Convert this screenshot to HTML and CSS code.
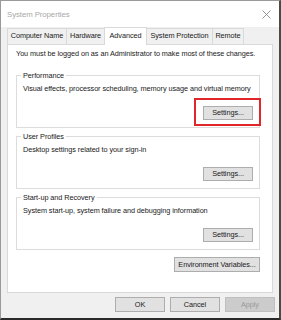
FILE: index.html
```html
<!DOCTYPE html>
<html>
<head>
<meta charset="utf-8">
<link rel="stylesheet" href="styles.css">
</head>
<body>
<div class="window">
  <div class="titlebar">
    <span class="title">System Properties</span>
    <svg class="close" width="9" height="9" viewBox="0 0 9 9"><path d="M0.5 0.5 L8.5 8.5 M8.5 0.5 L0.5 8.5" stroke="#8a8a8a" stroke-width="0.9" fill="none"/></svg>
  </div>
  <div class="tabs">
    <div class="tab t-cn">Computer Name</div>
    <div class="tab t-hw">Hardware</div>
    <div class="tab t-adv active">Advanced</div>
    <div class="tab t-sp">System Protection</div>
    <div class="tab t-rm">Remote</div>
  </div>
  <div class="panel">
    <div class="notice">You must be logged on as an Administrator to make most of these changes.</div>
    <div class="group">
      <div class="group-title">Performance</div>
      <div class="group-text">Visual effects, processor scheduling, memory usage and virtual memory</div>
      <div class="group-actions">
        <button class="btn btn-settings highlighted">Settings...</button>
      </div>
    </div>
    <div class="group">
      <div class="group-title">User Profiles</div>
      <div class="group-text">Desktop settings related to your sign-in</div>
      <div class="group-actions">
        <button class="btn btn-settings">Settings...</button>
      </div>
    </div>
    <div class="group">
      <div class="group-title">Start-up and Recovery</div>
      <div class="group-text">System start-up, system failure and debugging information</div>
      <div class="group-actions">
        <button class="btn btn-settings">Settings...</button>
      </div>
    </div>
    <div class="env-row">
      <button class="btn btn-env">Environment Variables...</button>
    </div>
  </div>
  <div class="footer">
    <button class="btn btn-foot">OK</button>
    <button class="btn btn-foot">Cancel</button>
    <button class="btn btn-foot disabled">Apply</button>
  </div>
</div>
</body>
</html>
```
FILE: styles.css
```css
html, body {
  margin: 0;
  padding: 0;
  background: #ffffff;
}
body {
  width: 281px;
  height: 320px;
  overflow: hidden;
  font-family: "Liberation Sans", Arial, sans-serif;
  font-size: 7.3px;
  letter-spacing: -0.07px;
  color: #1a1a1a;
}
.window {
  box-sizing: border-box;
  width: 281px;
  height: 320px;
  background: #f0f0f0;
  border-top: 1px solid #9a9a9a;
  border-left: 1px solid #9a9a9a;
  border-right: 2px solid #4a4a4a;
  border-bottom: 2px solid #2a2a2a;
  display: flex;
  flex-direction: column;
}
.titlebar {
  height: 26px;
  background: #ffffff;
  display: flex;
  align-items: center;
  justify-content: space-between;
  padding: 0 8px 0 6px;
  flex: none;
}
.title {
  color: #a8a8a8;
  font-size: 7.8px;
}
.close {
  display: block;
}
.tabs {
  display: flex;
  align-items: flex-end;
  height: 17px;
  padding-left: 6px;
  flex: none;
  position: relative;
  z-index: 1;
}
.tab {
  box-sizing: border-box;
  height: 16px;
  line-height: 14px;
  text-align: center;
  background: #f0f0f0;
  border: 1px solid #d9d9d9;
  border-right: none;
  border-bottom: none;
  white-space: nowrap;
}
.t-cn { width: 59px; }
.t-hw { width: 38px; }
.t-adv { width: 43px; }
.t-sp { width: 65px; }
.t-rm { width: 32px; border-right: 1px solid #d9d9d9; }
.tab.active {
  height: 18px;
  background: #ffffff;
  border-right: 1px solid #d9d9d9;
  margin-bottom: -1px;
  line-height: 15px;
}
.tab.active + .tab {
  border-left: none;
}
.panel {
  box-sizing: border-box;
  margin: 0 6px 0 6px;
  height: 249px;
  background: #ffffff;
  border: 1px solid #d9d9d9;
  padding: 4px 12px 0 8px;
  flex: none;
}
.notice {
  line-height: 10px;
  margin-bottom: 16px;
  white-space: nowrap;
}
.group {
  border: 1px solid #dcdcdc;
  padding: 0 6px 7px 6px;
  margin-bottom: 8px;
}
.group-title {
  margin: -6px 0 0 -2px;
  padding: 0 2px;
  background: #ffffff;
  width: max-content;
  line-height: 11px;
}
.group-text {
  margin-top: 3px;
  line-height: 10px;
  white-space: nowrap;
}
.group-actions {
  display: flex;
  justify-content: flex-end;
  margin-top: 12px;
}
.btn {
  box-sizing: border-box;
  font-family: "Liberation Sans", Arial, sans-serif;
  font-size: 7.3px;
  letter-spacing: -0.07px;
  color: #1a1a1a;
  background: #e1e1e1;
  border: 1px solid #adadad;
  border-radius: 0;
  height: 14px;
  padding: 0;
  margin: 0;
  line-height: 12px;
}
.btn-settings {
  width: 50px;
  position: relative;
}
.btn-settings.highlighted::after {
  content: "";
  position: absolute;
  left: -10px;
  top: -9px;
  width: 63px;
  height: 24px;
  border: 2px solid #e0262b;
}
.env-row {
  display: flex;
  justify-content: flex-end;
  margin-top: -1px;
}
.btn-env {
  width: 86px;
  height: 15px;
}
.footer {
  flex: 1;
  display: flex;
  justify-content: flex-end;
  align-items: flex-start;
  gap: 5px;
  padding: 4px 4px 0 0;
}
.btn-foot {
  width: 50px;
  height: 15px;
}
.btn-foot.disabled {
  background: #cccccc;
  border-color: #bfbfbf;
  color: #9a9a9a;
}
```
